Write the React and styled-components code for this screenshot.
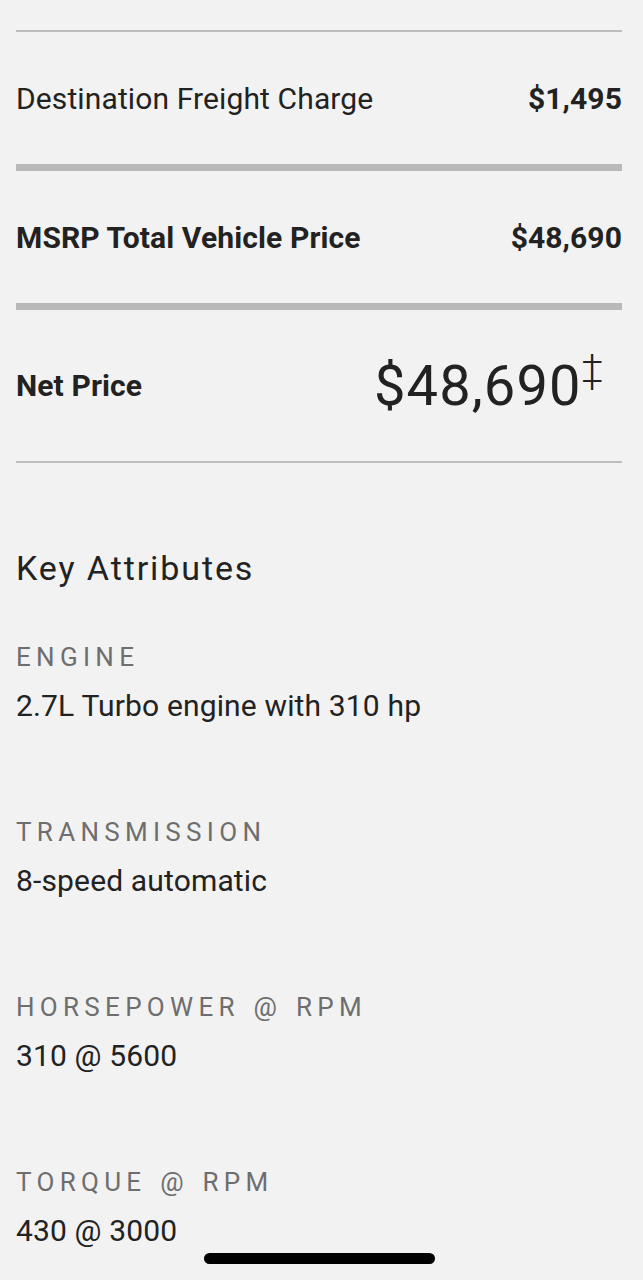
import React from "react";
import styled, { createGlobalStyle } from "styled-components";

const GlobalStyle = createGlobalStyle`
  html, body {
    margin: 0;
    padding: 0;
    background: #f2f2f2;
  }
  body {
    font-family: Roboto, "Liberation Sans", sans-serif;
    color: #222;
  }
`;

const Page = styled.div`
  min-height: 1280px;
  padding: 30px 21px 0 16px;
  box-sizing: border-box;
`;

const Divider = styled.hr`
  border: 0;
  margin: 0;
  height: ${({ $thick }) => ($thick ? "7px" : "2px")};
  background: ${({ $thick }) => ($thick ? "#b9b9b9" : "#bdbdbd")};
`;

const PriceRow = styled.div`
  display: flex;
  align-items: center;
  justify-content: space-between;
  height: ${({ $tall }) => ($tall ? "151px" : "132px")};
`;

const RowLabel = styled.span`
  font-size: 30px;
  letter-spacing: 0.12px;
  font-weight: ${({ $bold }) => ($bold ? 700 : 400)};
`;

const RowValue = styled.span`
  font-size: 30px;
  font-weight: 700;
  letter-spacing: 0.1px;
`;

const NetValue = styled.span`
  display: flex;
  align-items: flex-start;
  margin-right: 19px;
`;

const BigPrice = styled.span`
  font-size: 56px;
  letter-spacing: 1.1px;
  line-height: 1;
`;

const Dagger = styled.span`
  font-size: 38px;
  font-weight: 300;
  line-height: 1;
  margin: -8px 0 0 0;
`;

const Heading = styled.h2`
  margin: 85px 0 0;
  font-size: 34px;
  font-weight: 400;
  letter-spacing: 1.9px;
  line-height: 40px;
`;

const AttrList = styled.dl`
  margin: 53px 0 0;
  display: flex;
  flex-direction: column;
  gap: 92px;
`;

const Attr = styled.div`
  display: flex;
  flex-direction: column;
  gap: 15px;
`;

const AttrLabel = styled.dt`
  font-size: 26px;
  line-height: 32px;
  letter-spacing: 5.3px;
  word-spacing: 2px;
  color: #6e6e6e;
  text-transform: uppercase;
`;

const AttrValue = styled.dd`
  margin: 0;
  font-size: 30px;
  line-height: 36px;
  letter-spacing: 0.15px;
`;

const HomeIndicator = styled.div`
  position: fixed;
  left: 204px;
  top: 1253px;
  width: 231px;
  height: 11px;
  border-radius: 6px;
  background: #000;
`;

const attributes = [
  { label: "Engine", value: "2.7L Turbo engine with 310 hp" },
  { label: "Transmission", value: "8-speed automatic" },
  { label: "Horsepower @ RPM", value: "310 @ 5600" },
  { label: "Torque @ RPM", value: "430 @ 3000" },
];

export default function App() {
  return (
    <>
      <GlobalStyle />
      <Page>
        <Divider />
        <PriceRow>
          <RowLabel>Destination Freight Charge</RowLabel>
          <RowValue>$1,495</RowValue>
        </PriceRow>
        <Divider $thick />
        <PriceRow>
          <RowLabel $bold>MSRP Total Vehicle Price</RowLabel>
          <RowValue>$48,690</RowValue>
        </PriceRow>
        <Divider $thick />
        <PriceRow $tall>
          <RowLabel $bold>Net Price</RowLabel>
          <NetValue>
            <BigPrice>$48,690</BigPrice>
            <Dagger>‡</Dagger>
          </NetValue>
        </PriceRow>
        <Divider />
        <Heading>Key Attributes</Heading>
        <AttrList>
          {attributes.map((a) => (
            <Attr key={a.label}>
              <AttrLabel>{a.label}</AttrLabel>
              <AttrValue>{a.value}</AttrValue>
            </Attr>
          ))}
        </AttrList>
      </Page>
      <HomeIndicator />
    </>
  );
}
